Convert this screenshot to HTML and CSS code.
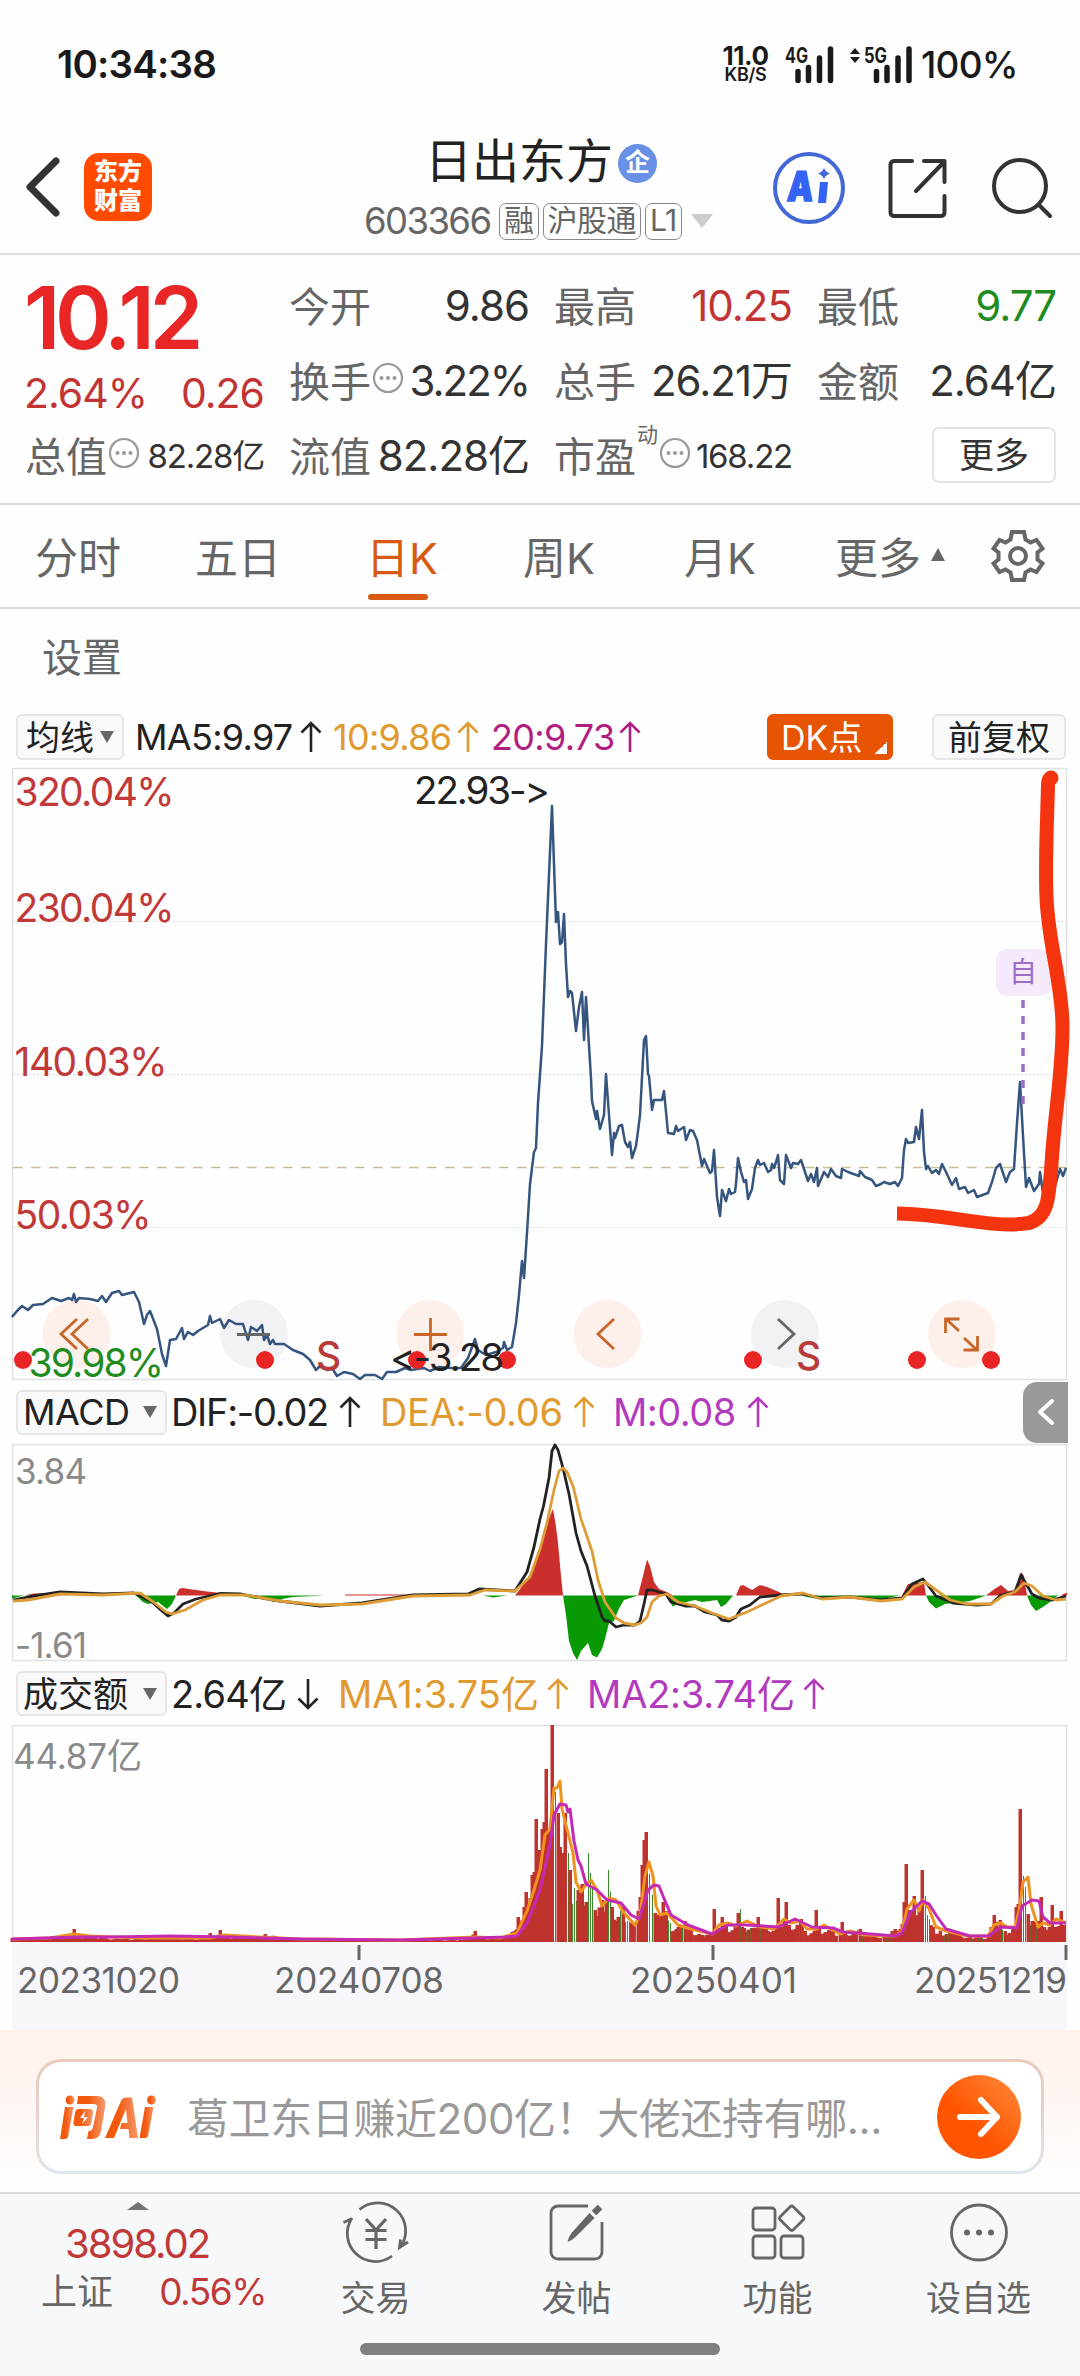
FILE: index.html
```html
<!DOCTYPE html>
<html lang="zh-CN">
<head>
    <meta charset="UTF-8">
    <meta name="viewport" content="width=device-width, initial-scale=1.0">
    <title>日出东方 603366</title>
    <link rel="stylesheet" href="styles.css">
</head>
<body>
    <svg width="0" height="0" class="defs">
        <symbol id="up" viewBox="0 0 22 32"><path d="M11 31V2M1.5 11.5L11 2l9.500 9.500" fill="none" stroke="currentColor" stroke-width="2.600"/></symbol>
        <symbol id="down" viewBox="0 0 22 32"><path d="M11 1v29M1.500 20.500L11 30l9.500-9.500" fill="none" stroke="currentColor" stroke-width="2.600"/></symbol>
        <symbol id="more" viewBox="0 0 32 32"><circle cx="16" cy="16" r="14" fill="none" stroke="#999" stroke-width="2.200"/><circle cx="9.500" cy="16" r="2" fill="#999"/><circle cx="16" cy="16" r="2" fill="#999"/><circle cx="22.500" cy="16" r="2" fill="#999"/></symbol>
    </svg>

    <!-- Status bar -->
    <div class="status-bar">
        <span class="time">10:34:38</span>
        <div class="speed"><b>11.0</b><span>KB/S</span></div>
        <svg class="signal" width="50" height="40" viewBox="0 0 50 40">
            <text x="0" y="17.500" textLength="23" lengthAdjust="spacingAndGlyphs">4G</text>
            <path d="M13 26.500v9M23.500 22.500v13M34.500 13v22.500M45.500 4v31.500"/>
        </svg>
        <svg class="signal signal-5g" width="64" height="40" viewBox="0 0 64 40">
            <path class="tri" d="M0 9l5-6 5 6zM0 12h10l-5 6z"/>
            <text x="14" y="17.500" textLength="23" lengthAdjust="spacingAndGlyphs">5G</text>
            <path d="M26.500 26.500v9M37 22.500v13M48 13v22.500M59 4v31.500"/>
        </svg>
        <span class="battery">100%</span>
    </div>

    <!-- Header -->
    <header class="header">
        <svg class="back" width="36" height="60" viewBox="0 0 36 60"><path d="M31 4L5 30l26 26"/></svg>
        <div class="brand"><span>东方</span><span>财富</span></div>
        <div class="stock">
            <div class="stock-name"><span>日出东方</span><i class="badge">企</i></div>
            <div class="stock-code">
                <span class="code">603366</span><i>融</i><i>沪股通</i><i>L1</i>
                <svg width="24" height="16" viewBox="0 0 24 16"><path d="M1 1h22L12 15z" fill="#ccc"/></svg>
            </div>
        </div>
        <div class="actions">
            <svg width="74" height="74" viewBox="0 0 74 74">
                <circle cx="37" cy="37" r="34" fill="none" stroke="#4367d4" stroke-width="4"/>
                <text x="15" y="50" class="ai-text" textLength="26" lengthAdjust="spacingAndGlyphs" transform="skewX(-4) translate(3 0)">A</text>
                <path d="M48 31h8l-2 21h-8z" fill="#3463f3"/>
                <path d="M52 17q1.500 4 6 5.500-4.500 1.500-6 5.500-1.500-4-6-5.500 4.500-1.500 6-5.500z" fill="#4367d4"/>
            </svg>
            <svg width="60" height="60" viewBox="0 0 60 60" class="line-icon">
                <path d="M24 3H6a3.500 3.500 0 0 0-3.500 3.500v48A3.500 3.500 0 0 0 6 58h47a3.500 3.500 0 0 0 3.500-3.500V38M36 3h20.500v21M55 5L28 33"/>
            </svg>
            <svg width="62" height="62" viewBox="0 0 62 62" class="line-icon">
                <circle cx="29" cy="29" r="26"/><path d="M48 48l11 11"/>
            </svg>
        </div>
    </header>

    <!-- Quote -->
    <section class="quote">
        <div class="price-col">
            <div class="price">10.12</div>
            <div class="change"><span>2.64%</span><span>0.26</span></div>
            <div class="cell"><span>总值<svg class="info"><use href="#more"/></svg></span><b class="small">82.28亿</b></div>
        </div>
        <div class="cell"><span>今开</span><b>9.86</b></div>
        <div class="cell"><span>最高</span><b class="red">10.25</b></div>
        <div class="cell"><span>最低</span><b class="green">9.77</b></div>
        <div class="cell"><span>换手<svg class="info"><use href="#more"/></svg></span><b class="tight">3.22%</b></div>
        <div class="cell"><span>总手</span><b>26.21万</b></div>
        <div class="cell"><span>金额</span><b>2.64亿</b></div>
        <div class="cell"><span>流值</span><b>82.28亿</b></div>
        <div class="cell"><span>市盈<sup>动</sup><svg class="info"><use href="#more"/></svg></span><b class="small">168.22</b></div>
        <div class="cell cell-btn"><button class="more-btn">更多</button></div>
    </section>

    <!-- Period tabs -->
    <nav class="tabs">
        <span>分时</span>
        <span>五日</span>
        <span class="active">日K</span>
        <span>周K</span>
        <span>月K</span>
        <span>更多<svg width="16" height="14" viewBox="0 0 16 14"><path d="M8 0l7 13H1z" fill="#666"/></svg></span>
        <svg class="gear" width="56" height="56" viewBox="0 0 56 56">
            <path d="M22 4h12l1.500 7.500 5 3 6-2.500 6 8.500-5 4v7l5 4-6 8.500-6-2.500-5 3L34 52H22l-1.500-7.500-5-3-6 2.500-6-8.500 5-4v-7l-5-4 6-8.500 6 2.500 5-3z"/>
            <circle cx="28" cy="28" r="8"/>
        </svg>
    </nav>

    <div class="setting">设置</div>

    <!-- Main chart -->
    <div class="row ma-row">
        <span class="chip"><em>均线</em><svg width="16" height="14" viewBox="0 0 16 14"><path d="M1 1h14L8 13z" fill="#666"/></svg></span>
        <span class="item black ma5">MA5:9.97<svg class="arrow"><use href="#up"/></svg></span>
        <span class="item orange ma10">10:9.86<svg class="arrow"><use href="#up"/></svg></span>
        <span class="item magenta ma20">20:9.73<svg class="arrow"><use href="#up"/></svg></span>
        <span class="chip dk"><em>DK点</em></span>
        <span class="chip fq"><em>前复权</em></span>
    </div>

    <svg class="chart" width="1080" height="613" viewBox="0 0 1080 613">
        <rect class="frame" x="12.500" y="1.500" width="1054" height="611"/>
        <path class="grid" d="M13 154.500H1067M13 307.500H1067M13 460.500H1067"/>
        <path class="last" d="M13 400.500H1067"/>
        <g class="pad">
            <circle cx="76.500" cy="567" r="34" class="warm"/><circle cx="254" cy="567" r="34"/>
            <circle cx="430" cy="567" r="34" class="warm"/><circle cx="607.500" cy="567" r="34" class="warm"/>
            <circle cx="785" cy="567" r="34"/><circle cx="962" cy="567" r="34" class="warm"/>
        </g>
        <rect x="996" y="182" width="56" height="47" rx="11" fill="#f4eafc"/>
        <text x="1009" y="215" class="mark">自</text>
        <polyline class="price-line" points="12,550 17,544 22,539 28,543 33,538 43,537 52,531 61,534 69,531 72,533 74,527 76,535 79,531 90,532 98,534 102,529 106,535 112,526 119,524 122,528 134,525 139,535 144,557 147,548 150,544 157,562 162,587 166,599 170,573 176,572 182,561 184,572 188,565 193,568 198,564 208,558 210,549 212,556 220,552 224,561 229,553 236,557 243,557 248,573 251,560 257,564 262,558 264,573 267,568 270,577 273,573 275,577 284,577 293,583 303,587 310,593 316,603 320,599 327,603 332,601 337,609 344,605 353,607 360,612 365,608 375,608 382,612 387,605 396,605 405,601 411,603 424,601 430,604 439,600 451,601 461,601 468,591 475,572 478,583 486,588 496,585 503,581 504,575 507,583 512,580 516,556 519,528 522,494 524,511 527,466 530,417 534,385 536,381 538,336 542,279 546,177 552,39 556,155 558,145 560,177 562,175 564,147 566,197 568,230 570,224 572,226 576,264 579,240 582,225 584,273 586,230 591,311 592,334 596,352 597,344 600,362 604,348 606,307 609,348 612,388 614,366 615,371 619,359 622,358 625,375 628,380 630,375 632,391 636,379 638,364 640,348 644,273 646,269 648,307 649,309 652,343 654,333 662,333 664,324 668,366 674,367 676,359 678,364 684,360 686,373 690,363 693,364 697,373 702,399 704,392 710,406 712,404 714,383 717,430 720,449 722,423 726,434 729,422 731,427 735,425 736,417 738,391 741,405 744,415 746,413 748,432 752,422 755,401 758,393 760,398 764,396 768,405 771,403 772,397 774,401 776,395 778,388 780,413 784,417 786,388 791,401 793,396 798,397 801,393 808,414 811,407 814,415 817,401 818,419 824,405 828,410 831,402 836,409 841,411 842,402 848,405 859,409 860,404 865,410 872,413 876,419 881,417 884,415 890,417 895,415 898,419 902,411 904,383 906,372 908,376 914,375 916,360 919,372 922,343 924,385 926,402 928,399 932,406 936,403 939,407 942,397 946,405 952,418 956,411 959,422 965,420 968,426 974,423 977,430 988,426 992,415 996,401 1000,397 1006,415 1010,405 1014,402 1017,356 1020,315 1023,369 1026,420 1029,411 1034,424 1039,417 1040,405 1043,426 1053,426 1060,402 1063,409 1066,401"/>
        <path d="M1023 233V337" stroke="#9b6dc9" stroke-width="3.500" stroke-dasharray="8 8"/>
        <g class="pad-icons">
            <path d="M77 552L61 567l16 15M88 552L72 567l16 15" class="o"/>
            <path d="M237 567.500h33"/>
            <path d="M430.500 551v33M414 567.500h33" class="o"/>
            <path d="M614 552L598 567l16 15" class="o"/>
            <path d="M778 552l16 15-16 15"/>
            <path d="M945.500 566v-14h14M946 552l13 12M977.500 569v14h-14M977 583l-13-12" class="o"/>
        </g>
        <g class="axis-label">
            <text x="14.500" y="39" textLength="160">320.04%</text>
            <text x="14.500" y="155" textLength="160">230.04%</text>
            <text x="14.500" y="308.500" textLength="153">140.03%</text>
            <text x="14.500" y="461.500" textLength="137">50.03%</text>
            <text x="13" y="610" textLength="151" class="down">-39.98%</text>
        </g>
        <g class="sell"><text x="316" y="603">S</text><text x="796" y="603">S</text></g>
        <g fill="#e92424">
            <circle cx="23" cy="593" r="9"/><circle cx="265" cy="593" r="9"/><circle cx="417" cy="593" r="9"/><circle cx="507" cy="593" r="9"/>
            <circle cx="753" cy="593" r="9"/><circle cx="917" cy="593" r="9"/><circle cx="991" cy="593" r="9"/>
        </g>
        <g class="extreme">
            <text x="414" y="37" textLength="136">22.93-&gt;</text>
            <text x="390" y="604" textLength="114">&lt;-3.28</text>
        </g>
        <path class="brush" d="M1051 11Q1048 12 1048 18C1047 60 1045 95 1046.500 130C1048 175 1062 215 1062.500 258C1063 300 1055 345 1052 390C1049 430 1049 450 1029 456C990 462 950 447 897 446.500"/>
        <circle cx="1051" cy="11" r="7.500" fill="#f4330f"/>
    </svg>

    <!-- MACD -->
    <div class="row sub-row">
        <span class="chip sub-chip"><em class="latin">MACD</em><svg width="16" height="14" viewBox="0 0 16 14"><path d="M1 1h14L8 13z" fill="#666"/></svg></span>
        <span class="item black dif">DIF:-0.02<svg class="arrow"><use href="#up"/></svg></span>
        <span class="item orange dea">DEA:-0.06<svg class="arrow"><use href="#up"/></svg></span>
        <span class="item purple macd">M:0.08<svg class="arrow"><use href="#up"/></svg></span>
        <span class="fold"><svg width="18" height="26" viewBox="0 0 18 26"><path d="M15 2L3 13l12 11"/></svg></span>
    </div>

    <svg class="chart" width="1080" height="218" viewBox="0 0 1080 218">
        <rect class="frame" x="12.500" y=".5" width="1054" height="216"/>
        <g class="hist-up">
            <path d="M24 151.500l10-2 26-1v3zM176 151.500l3-6.500 3-1 21 3 17 2 8 2.500zM345 151.500v-1h75v1zM515 151.500l12-15.500 13-29 7-28 6-14 2.500 14 2.500 20 3 33 2 19.500z"/>
            <path d="M638 151.500l5-19.500 4-16.500 3 6.500 4 16 5 7 8 3 6 3.500zM736 151.500l4-9.500 3-1 9 5 8-5 7 2 12 5 6 3.500zM902 151.500l6-11.500 16-2 2 13.500zM986 151.500l8.500-6.500 6.500-4 7 6 7-1 4-10 2-8 3 4 3 19.500zM1060 151.500l7-3v3z"/>
        </g>
        <g class="hist-down">
            <path d="M12 151.500h12l-12 3zM136 151.500l7 6.500 5 2 10-2 9 7 5-5 4-8.500zM241 151.500l14 3.500h27l11-2 32-1.500zM483 151.500l10 2 14-2z"/>
            <path d="M563 151.500l3 19.500 3 26 4 12 4 7 4-9 7-8 4 12 5 2.500 5-8.500 3-10 4-16 5-2 5-12.500 5-8.500 14-4.500zM667 151.500l5.500 11 5.500-2.500 17-4 7 2 15-2 4 7 5-3 7-8.500zM800 151.500l20 4 30-2 30 2 20-4zM926 151.500l3 6.500 7 6.500 9-4.500 25-3 16-5.500zM1027 151.500l4 9.500 5 6 7-4 7-5 8-6.500z"/>
        </g>
        <polyline class="line dif-line" points="13,156 28,153 60,148 103,150 134,149 152,158 162,167 168,172 174,169 183,160 196,155 220,149.500 241,150 272,156 320,162 362,159 413,151 468,150 479,145 515,147 527,128 534,103 540,75 543.500,62 549,34 552,7 555,1 558,6 563,24 569,50 576,89 581,107 587,122 595,152 602,173 605,177 609,177 616,183 624,181 635,181 640,177 644,160 647,146 652,146 666,150 671,158 685,162 695,162 705,168 717,171 722,176 729,177 736,173 741,165 750,161 760,153 781,151 802,150 822,154 850,153 881,156 902,154 912,140 923,135 927,140 936,152 953,159 977,161 991,160 1001,151 1015,148 1021,131 1025,138 1032,150 1039,154 1053,156 1066,152"/>
        <polyline class="line dea-line" points="13,157 28,156 60,150 103,151 140,149 152,157 166,168 172,170 185,166 203,156 220,151 245,151 280,157 320,161 362,160 413,152 470,151 485,146 515,147 530,133 540,105 547,79 554,46 559,27 563,24 567,28 573,42 581,75 592,107 598,136 605,158 616,174 624,179 635,181 641,179 647,173 652,158 659,152 667,150 678,158 695,162 712,169 729,175 747,168 764,160 781,152 803,149 822,155 850,153 881,157 902,155 914,143 925,138 936,146 950,156 967,160 991,160 1003,152 1015,148 1024,139 1032,142 1043,152 1056,156 1066,155"/>
        <g class="range"><text x="15" y="39.500" textLength="72">3.84</text><text x="15" y="213.500" textLength="72">-1.61</text></g>
    </svg>

    <!-- Turnover -->
    <div class="row sub-row vol-row">
        <span class="chip sub-chip"><em>成交额</em><svg width="16" height="14" viewBox="0 0 16 14"><path d="M1 1h14L8 13z" fill="#666"/></svg></span>
        <span class="item black vol"><em>2.64亿</em><svg class="arrow"><use href="#down"/></svg></span>
        <span class="item orange ma1"><em>MA1:3.75亿</em><svg class="arrow"><use href="#up"/></svg></span>
        <span class="item purple ma2"><em>MA2:3.74亿</em><svg class="arrow"><use href="#up"/></svg></span>
    </div>

    <svg class="chart" width="1080" height="305" viewBox="0 0 1080 305">
        <rect x="12" y="217" width="1055" height="88" fill="#f7f7fb"/>
        <path class="frame" d="M12.500 217V.5H1066.500V217"/>
        <g id="volume"></g>
        <polyline class="line vol-ma1" points="12,214 50,213 74,209 90,211 140,213 210,213 225,210 260,212 300,214 400,215 475,212 500,213 517,208 527,186 534,165 540,145 545,110 550,104 554,63 557,63 560,56 562,84 568,108 573,128 576,157 581,167 585,161 591,155 597,165 602,181 609,173 616,175 624,188 635,200 640,190 645,151 649,137 653,151 656,181 660,190 667,188 678,200 691,204 712,209 719,200 728,198 736,201 747,196 760,202 774,204 784,194 791,198 800,196 807,204 817,204 824,200 840,209 850,206 864,210 895,211 902,206 907,184 914,175 919,186 923,175 929,184 936,202 946,206 967,211 988,211 994,200 1001,198 1007,202 1015,202 1019,186 1023,157 1028,152 1031,179 1038,202 1043,198 1050,200 1056,194 1066,198"/>
        <polyline class="line vol-ma2" points="12,214 80,212 110,212 170,211 230,212 300,214 400,215 475,213 505,212 517,211 527,198 534,181 540,165 543,151 550,120 554,90 560,79 566,80 568,87 570,84 574,116 578,135 581,141 586,159 597,165 607,175 621,178 631,190 639,194 643,181 648,165 654,160 659,161 663,171 671,190 688,200 712,209 728,200 747,200 778,202 795,194 812,202 833,203 843,207 871,209 895,211 902,208 910,188 922,176 929,179 936,190 946,204 970,211 988,211 1001,202 1017,203 1022,181 1032,175 1039,176 1043,192 1050,198 1066,198"/>
        <g class="range"><text x="13" y="44" textLength="129">44.87亿</text></g>
        <path d="M359 220v15M713 220v15M1066 220v15" stroke="#666" stroke-width="3"/>
        <g class="dates">
            <text x="17" y="267.500" textLength="163">20231020</text>
            <text x="274" y="267.500" textLength="170">20240708</text>
            <text x="630" y="267.500" textLength="167">20250401</text>
            <text x="914" y="267.500" textLength="153">20251219</text>
        </g>
    </svg>

    <!-- AI search -->
    <div class="ask">
        <div class="ask-box">
            <svg width="100" height="48" viewBox="0 0 100 48">
                <defs><linearGradient id="g" x1="0" x2="1"><stop offset=".4" stop-color="#f2590c"/><stop offset="1" stop-color="#f59a70"/></linearGradient></defs>
                <g fill="url(#g)">
                    <circle cx="12" cy="7" r="4.500"/>
                    <path d="M7 14h8.500L10 44q-.5 2-3 2H2z"/>
                    <path d="M20 3h18q11 0 9 11l-4 24q-1.500 8-9 8h-5l1.500-8q4 0 4.500-4l4-19q.5-4-3-4H19z"/>
                    <path d="M21 16h11q3.500 0 3 4l-1.500 9q-.5 4-4 4H18q-3 0-2.500-4l1.500-9q.5-4 4-4z"/>
                    <path d="M47 45L63 8q1.500-3.500 5-3.500h6L80 45h-8.500l-1-9H62l1.500-6h6l-1.500-14L56 45z"/>
                    <circle cx="93.500" cy="7" r="4.500"/>
                    <path d="M87 14h8.500L90 43q-.5 2-3 2h-5.500z"/>
                </g>
                <path d="M27 18l-5 7h4l-2 6 6-7h-4z" fill="#fff"/>
            </svg>
            <span class="ask-text">葛卫东日赚近200亿！大佬还持有哪...</span>
            <span class="go"><svg width="46" height="42" viewBox="0 0 46 42"><path d="M4 21h37M25 4l16 17-16 17"/></svg></span>
        </div>
    </div>

    <!-- Bottom bar -->
    <footer class="bottom">
        <div class="index">
            <svg width="22" height="8" viewBox="0 0 22 8"><path d="M0 8L11 0l11 8z" fill="#737373"/></svg>
            <div class="index-value">3898.02</div>
            <div class="index-name"><span>上证</span><b>0.56%</b></div>
        </div>
        <div class="nav-item">
            <svg width="68" height="64" viewBox="0 0 68 64">
                <path d="M17.500 8.500A28 28 0 0 1 58.500 46M50 55A28 28 0 0 1 10 17M1.500 21.500L10 17.500M66 41l-8.500 5.500 1-8"/>
                <path d="M24 18l10 11 10-11M34 29v19M23.500 29.500h21M23.500 38.500h21" stroke-width="3.200"/>
            </svg>
            <span>交易</span>
        </div>
        <div class="nav-item">
            <svg width="68" height="64" viewBox="0 0 68 64">
                <path d="M45 5H15a7 7 0 0 0-7 7v39a7 7 0 0 0 7 7h37a7 7 0 0 0 7-7V21"/>
                <path d="M51 12l6-6" stroke-width="6.500"/>
                <path d="M46.500 12l5 5-19 19q-3 3-8 5 1.500-6 4-9z" fill="#666" stroke="none"/>
            </svg>
            <span>发帖</span>
        </div>
        <div class="nav-item">
            <svg width="68" height="64" viewBox="0 0 68 64">
                <rect x="9" y="7" width="22" height="22" rx="3"/><rect x="9" y="35" width="22" height="22" rx="3"/><rect x="37" y="35" width="22" height="22" rx="3"/>
                <rect x="38.500" y="8" width="18.500" height="18.500" rx="2.500" transform="rotate(45 47.750 17.250)"/>
            </svg>
            <span>功能</span>
        </div>
        <div class="nav-item">
            <svg width="68" height="64" viewBox="0 0 68 64">
                <circle cx="34" cy="31.500" r="27.500"/>
                <g fill="#666" stroke="none"><circle cx="22" cy="31.500" r="3"/><circle cx="34" cy="31.500" r="3"/><circle cx="46" cy="31.500" r="3"/></g>
            </svg>
            <span>设自选</span>
        </div>
        <div class="home-bar"></div>
    </footer>

    <script src="script.js"></script>
</body>
</html>
```

FILE: styles.css
```css
* {
    margin: 0;
    padding: 0;
    box-sizing: border-box;
}

body {
    width: 1080px;
    height: 2376px;
    overflow: hidden;
    background: #fefefe;
    font-family: Inter, 'Noto Sans CJK SC', sans-serif;
    font-feature-settings: 'calt' 0;
    color: #333;
}

i, em {
    font-style: normal;
}

b {
    font-weight: 400;
}

svg {
    flex: none;
    display: block;
    overflow: visible;
}

.defs {
    display: none;
}

/* Status bar */
.status-bar {
    display: flex;
    align-items: center;
    height: 128px;
    padding-left: 57px;
    color: #1a1a1a;
}

.time {
    width: 665px;
    font-size: 38.5px;
    font-weight: 600;
    letter-spacing: -0.8px;
}

.speed {
    display: flex;
    flex-direction: column;
    width: 47px;
    align-items: center;
    font-weight: 600;
    font-size: 18px;
    line-height: 17px;
    letter-spacing: -0.3px;
}

.speed b {
    font-size: 26px;
    line-height: 21px;
    font-weight: 700;
    letter-spacing: -0.5px;
}

.signal {
    margin-left: 16px;
    margin-top: 1px;
    fill: none;
    stroke: #1a1a1a;
    stroke-width: 5.5;
    stroke-linecap: round;
}

.signal text {
    font-size: 21px;
    font-weight: 700;
    fill: #1a1a1a;
    stroke: none;
}

.signal .tri {
    fill: #1a1a1a;
    stroke: none;
}

.signal-5g {
    margin-left: 15px;
}

.battery {
    margin-left: 7px;
    font-size: 37px;
    font-weight: 500;
    letter-spacing: -0.8px;
}

/* Header */
.header {
    display: flex;
    height: 127px;
    border-bottom: 2px solid #ddd;
}

.back {
    margin: 29px 0 0 25px;
    fill: none;
    stroke: #333;
    stroke-width: 7;
    stroke-linecap: round;
    stroke-linejoin: round;
}

.brand {
    width: 68px;
    height: 68px;
    margin: 25px 0 0 23px;
    padding-top: 4px;
    border-radius: 15px;
    background: #ff4a00;
    color: #fff;
    font-size: 24px;
    font-weight: 900;
    line-height: 29px;
    text-align: center;
}

.brand span {
    display: block;
}

.stock {
    width: 400px;
    margin-left: 203px;
}

.stock-name {
    display: flex;
    align-items: center;
    height: 68px;
    padding-left: 70px;
    font-size: 47px;
    line-height: 60px;
    color: #222;
}

.stock-name span {
    margin-top: -2px;
}

.badge {
    width: 39px;
    height: 39px;
    margin-left: 5px;
    margin-top: 2px;
    border-radius: 50%;
    background: #6790e6;
    color: #fff;
    font-size: 25px;
    font-weight: 700;
    line-height: 37px;
    text-align: center;
}

.stock-code {
    display: flex;
    align-items: center;
    height: 44px;
    margin-top: 3px;
    padding-left: 9px;
    color: #666;
}

.code {
    width: 135px;
    font-size: 36.5px;
    letter-spacing: -1.6px;
}

.stock-code i {
    height: 37px;
    margin-right: 4px;
    padding: 0 4px;
    border: 1.5px solid #888;
    border-radius: 7px;
    font-size: 30px;
    line-height: 33px;
    letter-spacing: -0.5px;
}

.stock-code svg {
    margin-left: 4px;
}

.actions {
    display: flex;
    align-items: center;
    height: 119px;
    margin-left: 17px;
}

.line-icon {
    margin-left: 42px;
    fill: none;
    stroke: #333;
    stroke-width: 4;
    stroke-linecap: round;
    stroke-linejoin: round;
}

.line-icon + .line-icon {
    margin-left: 43px;
}

.ai-text {
    font-size: 41px;
    font-weight: 900;
    fill: #3463f3;
    stroke: #3463f3;
    stroke-width: 1.5;
}

/* Quote */
.quote {
    display: grid;
    grid-template-columns: 239px 240px 238px 239px;
    grid-auto-rows: 75px;
    column-gap: 25px;
    height: 250px;
    padding: 14px 0 0 25px;
    border-bottom: 2px solid #ddd;
}

.price-col {
    grid-row: span 3;
}

.price {
    height: 98px;
    margin-left: -1px;
    font-size: 86px;
    font-weight: 600;
    line-height: 98px;
    letter-spacing: -5.3px;
    color: #e92626;
}

.change {
    display: flex;
    justify-content: space-between;
    height: 52px;
    margin-left: -1px;
    font-size: 41px;
    line-height: 53px;
    letter-spacing: -1px;
    color: #c23434;
}

.cell {
    display: flex;
    align-items: center;
    justify-content: space-between;
    height: 75px;
    white-space: nowrap;
}

.cell span {
    display: flex;
    align-items: center;
    margin-top: -5px;
    font-size: 41px;
    color: #666;
}

.cell b {
    margin-top: -1px;
    font-size: 42px;
    line-height: 50px;
    letter-spacing: -1px;
}

.cell .tight {
    letter-spacing: -2px;
}

.cell .small {
    font-size: 33px;
    letter-spacing: -1.2px;
}

.cell .red {
    color: #c23434;
}

.cell .green {
    color: #1e8c1e;
}

.cell sup {
    align-self: flex-start;
    margin: -6px 0 0 1px;
    font-size: 21px;
}

.info {
    width: 32px;
    height: 32px;
    margin: -3px 0 0 1px;
}

.cell-btn {
    justify-content: flex-end;
}

.more-btn {
    width: 124px;
    height: 56px;
    margin-top: -4px;
    border: 2px solid #e4e4e4;
    border-radius: 7px;
    background: #fff;
    color: #333;
    font: 35px/46px Inter, 'Noto Sans CJK SC', sans-serif;
}

/* Tabs */
.tabs {
    display: flex;
    align-items: center;
    height: 104px;
    border-bottom: 2px solid #ddd;
    font-size: 43px;
    color: #666;
}

.tabs span {
    width: 158px;
    padding-left: 35px;
    margin-top: -2px;
    white-space: nowrap;
}

.tabs span:nth-child(2) {
    width: 175px;
    padding-left: 37px;
}

.tabs .active {
    position: relative;
    width: 155px;
    padding-left: 33px;
    color: #d85a12;
}

.tabs .active::after {
    content: '';
    position: absolute;
    left: 35px;
    bottom: -14px;
    width: 60px;
    height: 6px;
    border-radius: 3px;
    background: #d85a12;
}

.tabs span:nth-child(4) {
    width: 161px;
}

.tabs span:nth-child(5) {
    width: 151px;
}

.tabs span:nth-child(6) {
    display: flex;
    align-items: center;
    width: 190px;
}

.tabs span:nth-child(6) svg {
    margin-left: 9px;
}

.gear {
    fill: none;
    stroke: #666;
    stroke-width: 4;
}

.setting {
    height: 98px;
    padding-left: 42px;
    font-size: 40px;
    line-height: 97px;
    color: #666;
}

/* Indicator rows */
.row {
    display: flex;
    align-items: center;
    padding-left: 16px;
    white-space: nowrap;
}

.chip {
    display: flex;
    flex: none;
    align-items: center;
    justify-content: space-between;
    height: 46px;
    border: 2px solid #e6e6e8;
    border-radius: 6px;
    background: #f9f9fa;
    font-size: 34px;
    color: #222;
}

.chip em {
    margin-top: -4px;
}

.ma-row {
    height: 60px;
}

.ma-row .chip:first-child {
    width: 108px;
    padding: 0 7px 0 8px;
}

.ma-row .item {
    font-size: 36px;
    letter-spacing: -0.7px;
}

.ma-row .dk {
    width: 126px;
    justify-content: flex-start;
    padding-left: 12px;
    border-color: #e65404;
    color: #fff;
    background: linear-gradient(135deg, transparent 50%, #fff 50%) 106px 26px / 12px 12px no-repeat #e65404;
}

.ma-row .fq {
    width: 134px;
    margin-left: 39px;
    justify-content: center;
}

.item {
    display: flex;
    flex: none;
    align-items: center;
    justify-content: space-between;
    font-size: 38px;
}

.arrow {
    width: 22px;
    height: 32px;
}

.black { color: #222; }
.orange { color: #e09a2f; }
.magenta { color: #b01f80; }
.purple { color: #b23bbd; }

.ma5 { width: 187px; margin-left: 11px; }
.ma10 { width: 146px; margin-left: 11px; }
.ma20 { width: 150px; margin: 0 126px 0 12px; }

.sub-row {
    height: 64px;
}

.vol-row {
    height: 63px;
}

.vol-row .item em {
    margin-top: -5px;
}

.sub-chip {
    width: 151px;
    height: 45px;
    padding: 0 7px 0 5px;
    font-size: 35px;
}

.sub-chip .latin {
    margin-top: 0;
    font-size: 36px;
    letter-spacing: -0.5px;
}

.dif { width: 190px; margin-left: 4px; letter-spacing: -1.3px; }
.dea { width: 215px; margin-left: 19px; letter-spacing: -0.3px; }
.macd { width: 156px; margin-left: 18px; letter-spacing: -0.5px; }
.vol { width: 148px; margin-left: 4px; letter-spacing: -0.8px; }
.ma1 { width: 231px; margin-left: 19px; }
.ma2 { width: 238px; margin-left: 18px; letter-spacing: -0.2px; }

.fold {
    display: flex;
    align-items: center;
    justify-content: center;
    width: 45px;
    height: 61px;
    margin-left: auto;
    margin-right: 12px;
    border-radius: 14px 0 0 14px;
    background: #999;
}

.fold path {
    fill: none;
    stroke: #fff;
    stroke-width: 4;
    stroke-linecap: round;
    stroke-linejoin: round;
}

/* Charts */
.frame {
    fill: none;
    stroke: #dfe1e3;
    stroke-width: 1.5;
}

.grid {
    stroke: #ddd;
    stroke-dasharray: 2 2;
}

.last {
    stroke: #ccbe94;
    stroke-width: 1.6;
    stroke-dasharray: 9.5 8.5;
}

.pad circle {
    fill: #f2f2f4;
}

.pad .warm {
    fill: #fdefe9;
}

.pad-icons path {
    fill: none;
    stroke: #666;
    stroke-width: 2.8;
}

.pad-icons .o {
    stroke: #c8662a;
}

.mark {
    font-size: 28px;
    fill: #9b6dc9;
}

.price-line {
    fill: none;
    stroke: #35557f;
    stroke-width: 2.5;
    stroke-linejoin: round;
}

.axis-label text {
    font-size: 39px;
    fill: #c03838;
}

.axis-label .down {
    fill: #1e8c1e;
}

.sell text {
    font-size: 39px;
    font-weight: 500;
    fill: #b83a3a;
}

.extreme text {
    font-size: 38.5px;
    fill: #222;
}

.brush {
    fill: none;
    stroke: #f4330f;
    stroke-width: 14;
}

.hist-up {
    fill: #cb2f2c;
}

.hist-down {
    fill: #089a05;
}

.line {
    fill: none;
    stroke-width: 2.8;
    stroke-linejoin: round;
}

.dif-line { stroke: #222; }
.dea-line { stroke: #dd9c35; }
.vol-ma1 { stroke: #f0921e; stroke-width: 3; }
.vol-ma2 { stroke: #c32bb5; stroke-width: 3; }

.range text {
    font-size: 35px;
    fill: #8a8a8a;
}

.dates text {
    font-size: 35px;
    fill: #666;
}

/* AI search */
.ask {
    height: 162px;
    padding: 29px 36px 0;
    background: linear-gradient(#fff1ec, #fffaf8 75%, #fefefe);
}

.ask-box {
    display: flex;
    align-items: center;
    height: 115px;
    padding: 0 20px 0 19px;
    border: 3px solid transparent;
    border-radius: 25px;
    background: linear-gradient(#fff, #fff) padding-box, linear-gradient(#ebcabd, #e6d5d2 60%, #dfe6ee) border-box;
}

.ask-text {
    flex: 1;
    margin: -3px 0 0 29px;
    font-size: 42px;
    letter-spacing: -0.4px;
    color: #999;
    white-space: nowrap;
}

.go {
    display: flex;
    align-items: center;
    justify-content: center;
    width: 84px;
    height: 84px;
    border-radius: 50%;
    background: linear-gradient(225deg, #ff8a3c, #ff5500 60%);
}

.go path {
    fill: none;
    stroke: #fff;
    stroke-width: 6;
    stroke-linecap: round;
    stroke-linejoin: round;
}

/* Bottom bar */
.bottom {
    position: relative;
    display: flex;
    height: 184px;
    border-top: 2px solid #d9d9dd;
    background: #f7f8fa;
}

.index {
    width: 275px;
    padding-top: 8px;
}

.index svg {
    margin-left: 127px;
}

.index-value {
    height: 50px;
    margin-top: 9px;
    padding-left: 65px;
    font-size: 40px;
    line-height: 50px;
    letter-spacing: -2px;
    color: #c03838;
}

.index-name {
    display: flex;
    align-items: center;
    justify-content: space-between;
    height: 50px;
    margin-top: -2px;
    padding: 0 9px 0 41px;
    font-size: 36px;
    line-height: 44px;
    color: #666;
}

.index-name b {
    font-size: 37px;
    letter-spacing: -1.5px;
    color: #c03838;
}

.nav-item {
    width: 201px;
    padding-top: 7px;
    font-size: 35px;
    line-height: 50px;
    text-align: center;
    color: #666;
}

.nav-item svg {
    margin: 0 auto 8px;
    fill: none;
    stroke: #666;
    stroke-width: 2.8;
}

.home-bar {
    position: absolute;
    left: 360px;
    bottom: 21px;
    width: 360px;
    height: 12px;
    border-radius: 6px;
    background: #7f7f82;
}
```

FILE: script.js
```js
// turnover bars: [x, height, falling day]
const days = [
    [12, 4], [40, 3], [52, 6], [60, 4], [71, 5], [74, 13], [77, 6], [95, 5], [120, 3], [165, 5], [206, 3], [210, 9], [214, 4], [220, 12],
    [224, 5], [245, 6], [262, 4], [265, 8], [280, 5], [300, 3], [460, 2], [471, 4], [475, 11], [478, 4], [500, 4], [510, 8], [518, 25],
    [522, 22], [526, 50], [530, 44], [532, 67], [534, 70], [536, 123], [539, 92], [542, 113], [544, 120], [546, 173], [549, 111],
    [552, 217], [555, 150, 1], [558, 129], [560, 95], [562, 89], [565, 129], [568, 89, 1], [570, 72], [574, 54, 1], [578, 52], [582, 58],
    [586, 40], [588, 89, 1], [590, 69, 1], [592, 54, 1], [595, 32], [602, 42], [606, 40], [608, 72, 1], [612, 35], [623, 35], [627, 21, 1],
    [633, 19], [638, 31], [640, 45], [642, 77], [644, 102], [646, 110], [649, 68, 1], [652, 47, 1], [655, 29], [659, 27], [663, 40],
    [666, 31], [670, 19, 1], [678, 15], [685, 21], [691, 13], [702, 7], [711, 8], [714, 33], [717, 14], [722, 25], [726, 16], [735, 16],
    [738, 29], [740, 33, 1], [744, 14], [752, 14], [758, 25], [764, 17], [771, 10], [776, 14], [778, 44], [781, 15], [784, 22], [786, 40],
    [789, 17], [801, 23], [805, 11], [814, 11], [816, 32], [819, 14], [833, 11], [840, 9], [842, 20], [845, 9], [860, 13], [867, 8],
    [884, 6], [895, 13], [900, 13], [904, 40], [906, 78], [909, 32], [914, 46], [919, 32], [922, 72], [925, 46, 1], [927, 27, 1],
    [933, 15], [940, 11], [953, 9], [970, 5], [988, 5], [991, 15], [994, 27], [1000, 22], [1005, 11], [1013, 15], [1016, 35], [1018, 38],
    [1020, 133], [1023, 66, 1], [1025, 55, 1], [1028, 28], [1032, 21], [1038, 21], [1041, 45], [1044, 15], [1049, 15], [1052, 37],
    [1055, 15], [1059, 16], [1061, 31], [1064, 17], [1067, 16]
];

const volume = document.getElementById('volume');

function bar(x, h, down) {
    const rect = document.createElementNS('http://www.w3.org/2000/svg', 'rect');
    rect.setAttribute('x', down ? x : x - 1.5);
    rect.setAttribute('y', 217 - h);
    rect.setAttribute('width', down ? 1 : 3.5);
    rect.setAttribute('height', h);
    rect.setAttribute('fill', down ? '#3c8a2e' : '#be332d');
    volume.appendChild(rect);
}

for (let i = 0; i < days.length - 1; i++) {
    const [x, h, down] = days[i];
    const [nx, nh] = days[i + 1];
    bar(x, h, down);
    // fill the quiet days in between
    for (let k = x + 2; k < nx - 1; k += 2) {
        const wave = 0.8 + 0.2 * Math.sin(k * 2.7);
        bar(k, (h + (nh - h) * (k - x) / (nx - x)) * wave, k > 560 && Math.sin(k * 1.3) > 0.6);
    }
}
```
